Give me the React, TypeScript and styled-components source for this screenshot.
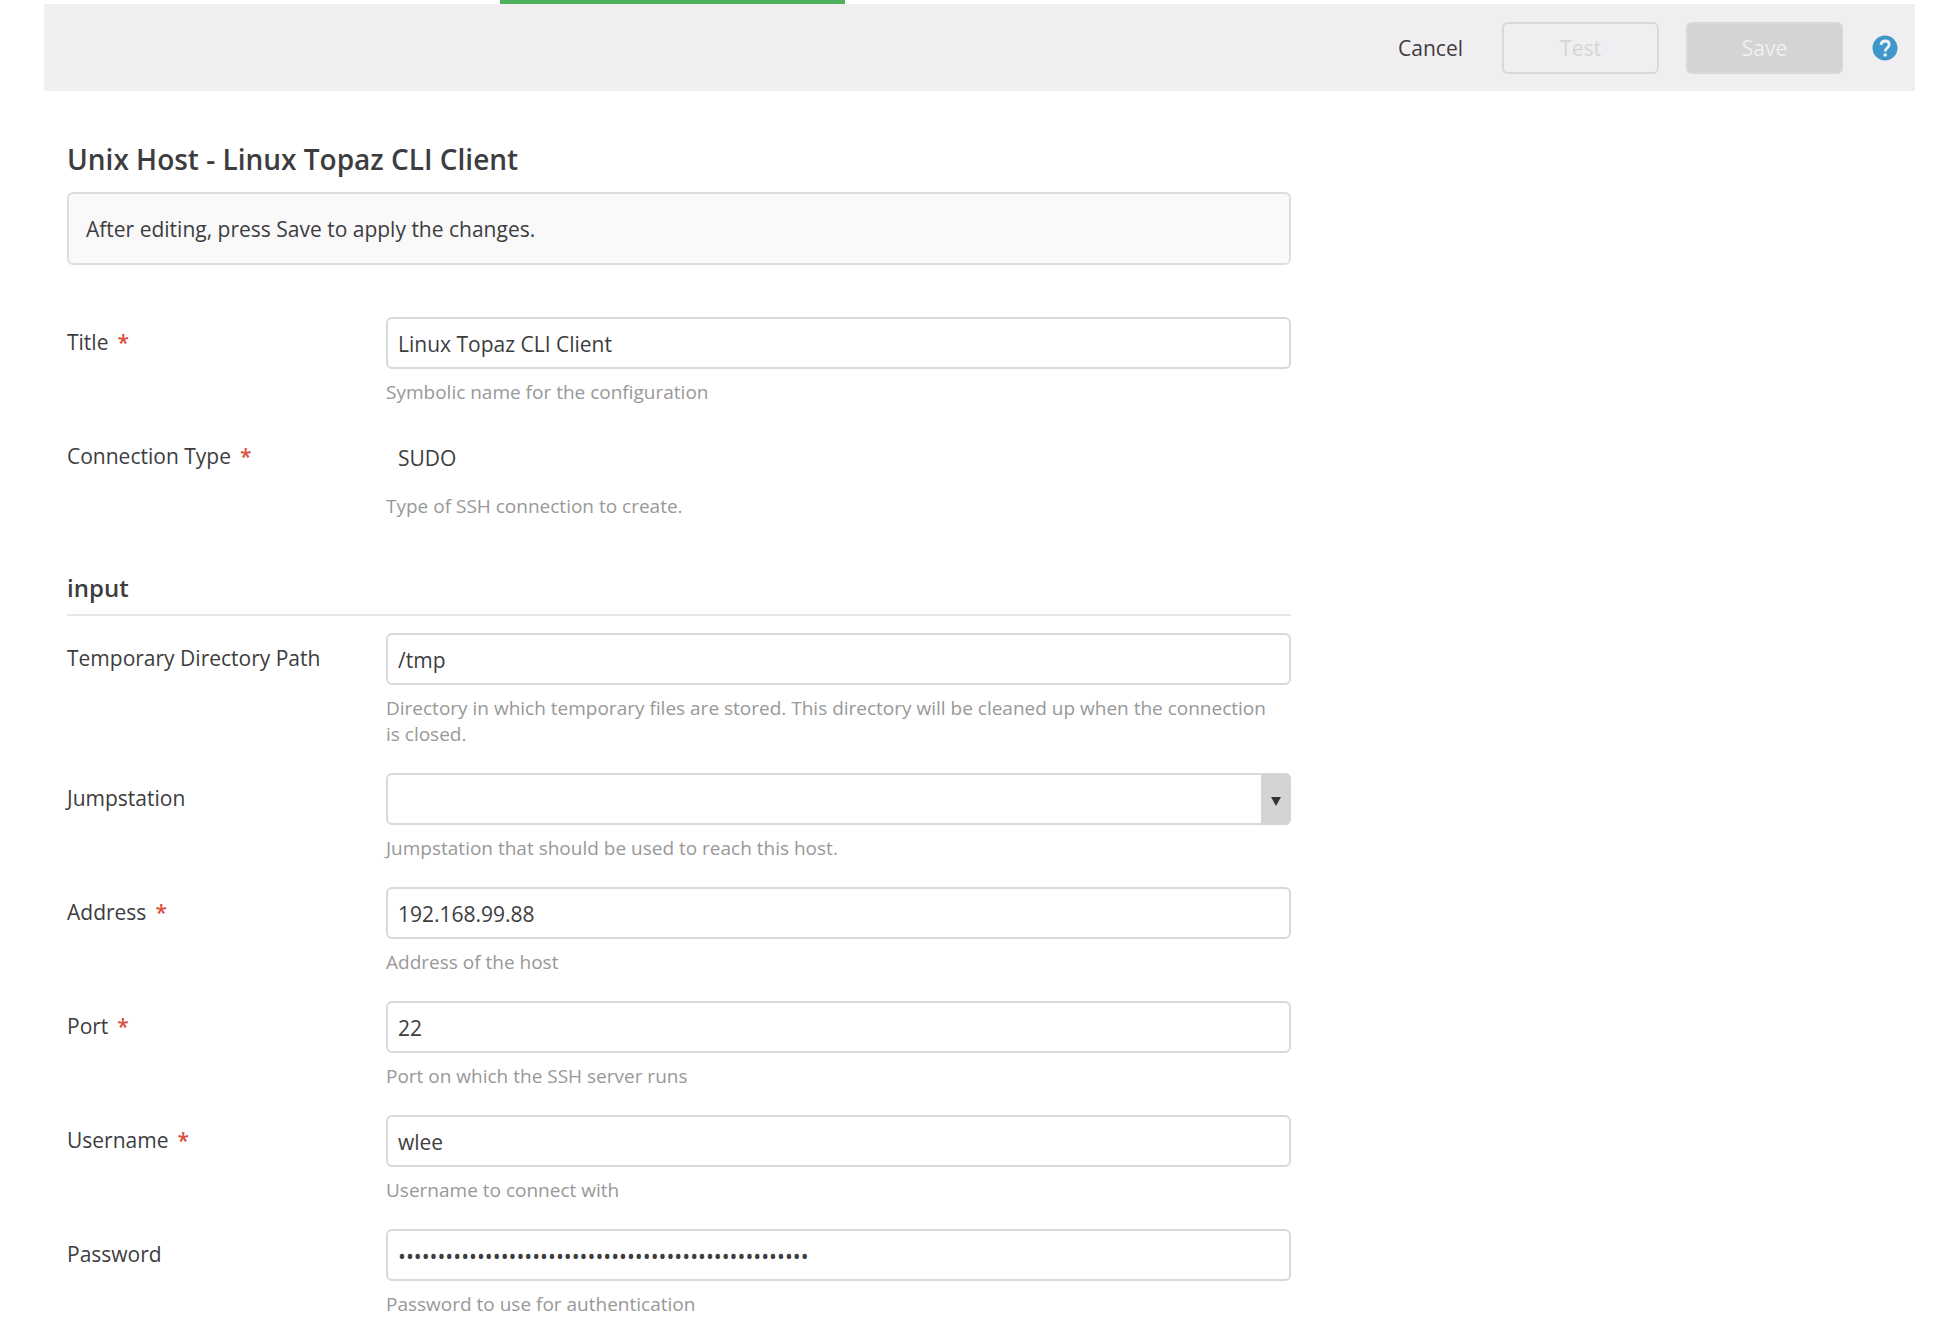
import React, { useId, useState } from "react";
import styled, { createGlobalStyle } from "styled-components";

const GlobalStyle = createGlobalStyle`
  * { box-sizing: border-box; }
  body {
    margin: 0;
    background: #fff;
    color: #3d3d3f;
    font-family: "Open Sans", "Noto Sans", sans-serif;
    font-size: 21px;
    line-height: 30px;
  }
`;

const Page = styled.div`
  padding: 0 21px 0 44px;
`;

const TabStrip = styled.nav`
  height: 4px;
  padding-left: 456px;
`;

const ActiveTab = styled.div`
  width: 345px;
  height: 4px;
  background: #4fb05c;
`;

const Toolbar = styled.header`
  display: flex;
  align-items: center;
  justify-content: flex-end;
  gap: 27px;
  height: 87px;
  padding-right: 17px;
  background: #f0eef1;
`;

const Button = styled.button<{ $kind: "text" | "outline" | "solid" }>`
  width: ${(p) => (p.$kind === "text" ? "auto" : "157px")};
  height: 52px;
  margin: 0;
  padding: 0 10px;
  font: inherit;
  border-radius: 6px;
  border: 2px solid ${(p) => (p.$kind === "text" ? "transparent" : "#d8d8d8")};
  background: ${(p) => (p.$kind === "solid" ? "#d4d4d4" : "transparent")};
  color: ${(p) => ({ text: "#3d3d3f", outline: "#d6d5d7", solid: "#f0f0f0" })[p.$kind]};
`;

const HelpButton = styled.button`
  display: flex;
  padding: 0 0 0 2px;
  border: 0;
  background: none;
`;

const Content = styled.main`
  max-width: 1247px;
  padding: 50px 0 0 23px;
`;

const PageTitle = styled.h1`
  margin: 0 0 15px;
  font-size: 28px;
  line-height: 36px;
  font-weight: 600;
`;

const Notice = styled.p`
  margin: 0 0 52px;
  padding: 20px 17px 19px;
  border: 2px solid #dedede;
  border-radius: 6px;
  background: #f9f9f9;
`;

const SectionTitle = styled.h2`
  margin: 27px 0 17px;
  padding-bottom: 10px;
  border-bottom: 2px solid #e6e6e6;
  font-size: 24px;
  line-height: 32px;
  font-weight: 600;
`;

const Row = styled.div`
  display: grid;
  grid-template-columns: 319px 1fr;
  padding-bottom: 26px;
`;

const Label = styled.label`
  padding: 10px 0 12px;
`;

const Required = styled.span`
  margin-left: 9px;
  color: #d9503f;
  font-weight: 600;
`;

const Input = styled.input`
  display: block;
  width: 100%;
  height: 52px;
  padding: 2px 10px 0;
  border: 2px solid #d9d9d9;
  border-radius: 6px;
  background: #fff;
  color: inherit;
  font: inherit;
  outline: none;
`;

const ReadOnly = styled.output`
  display: block;
  height: 52px;
  padding: 12px 12px 10px;
`;

const SelectBox = styled.div`
  position: relative;
`;

const Select = styled.select`
  appearance: none;
  display: block;
  width: 100%;
  height: 52px;
  padding: 0 40px 0 10px;
  border: 2px solid #d9d9d9;
  border-radius: 6px;
  background: #fff;
  color: inherit;
  font: inherit;
`;

const SelectArrow = styled.span`
  position: absolute;
  top: 0;
  right: 0;
  bottom: 0;
  display: flex;
  align-items: center;
  justify-content: center;
  width: 30px;
  padding-top: 4px;
  border-radius: 0 6px 6px 0;
  background: #d4d4d4;
  pointer-events: none;
`;

const Hint = styled.p`
  margin: 10px 0 0;
  padding-right: 12px;
  color: #989898;
  font-size: 19px;
  line-height: 26px;
`;

type FieldProps = {
  label: string;
  hint: string;
  required?: boolean;
  kind?: "text" | "password" | "select" | "static";
  value?: string;
};

function Field({ label, hint, required, kind = "text", value: initial = "" }: FieldProps) {
  const id = useId();
  const [value, setValue] = useState(initial);
  return (
    <Row>
      <Label htmlFor={id}>
        {label}
        {required && <Required>*</Required>}
      </Label>
      <div>
        {kind === "static" && <ReadOnly id={id}>{value}</ReadOnly>}
        {kind === "select" && (
          <SelectBox>
            <Select id={id} value={value} onChange={(e) => setValue(e.target.value)}>
              <option value="" />
            </Select>
            <SelectArrow>
              <svg width="10" height="9" viewBox="0 0 10 9" aria-hidden="true">
                <path d="M0 0H10L5 9Z" fill="#333" />
              </svg>
            </SelectArrow>
          </SelectBox>
        )}
        {(kind === "text" || kind === "password") && (
          <Input id={id} type={kind} value={value} onChange={(e) => setValue(e.target.value)} />
        )}
        <Hint>{hint}</Hint>
      </div>
    </Row>
  );
}

export default function App() {
  return (
    <>
      <GlobalStyle />
      <Page>
        <TabStrip>
          <ActiveTab />
        </TabStrip>
        <Toolbar>
          <Button type="button" $kind="text">Cancel</Button>
          <Button type="button" $kind="outline" disabled>Test</Button>
          <Button type="button" $kind="solid" disabled>Save</Button>
          <HelpButton type="button" aria-label="Help">
            <svg width="26" height="26" viewBox="0 0 26 26" aria-hidden="true">
              <circle cx="13" cy="13" r="12.500" fill="#3f97c9" />
              <path d="M9 9.800c.3-2.400 1.900-3.800 4.200-3.800 2.300 0 4 1.400 4 3.500 0 3.200-4 3.300-4 7" fill="none" stroke="#e6f2f8" strokeWidth="2.800" />
              <circle cx="13.200" cy="20" r="1.800" fill="#e6f2f8" />
            </svg>
          </HelpButton>
        </Toolbar>
        <Content>
          <PageTitle>Unix Host - Linux Topaz CLI Client</PageTitle>
          <Notice>After editing, press Save to apply the changes.</Notice>
          <Field label="Title" required value="Linux Topaz CLI Client" hint="Symbolic name for the configuration" />
          <Field label="Connection Type" required kind="static" value="SUDO" hint="Type of SSH connection to create." />
          <SectionTitle>input</SectionTitle>
          <Field
            label="Temporary Directory Path"
            value="/tmp"
            hint="Directory in which temporary files are stored. This directory will be cleaned up when the connection is closed."
          />
          <Field label="Jumpstation" kind="select" hint="Jumpstation that should be used to reach this host." />
          <Field label="Address" required value="192.168.99.88" hint="Address of the host" />
          <Field label="Port" required value="22" hint="Port on which the SSH server runs" />
          <Field label="Username" required value="wlee" hint="Username to connect with" />
          <Field label="Password" kind="password" value={"x".repeat(52)} hint="Password to use for authentication" />
        </Content>
      </Page>
    </>
  );
}
